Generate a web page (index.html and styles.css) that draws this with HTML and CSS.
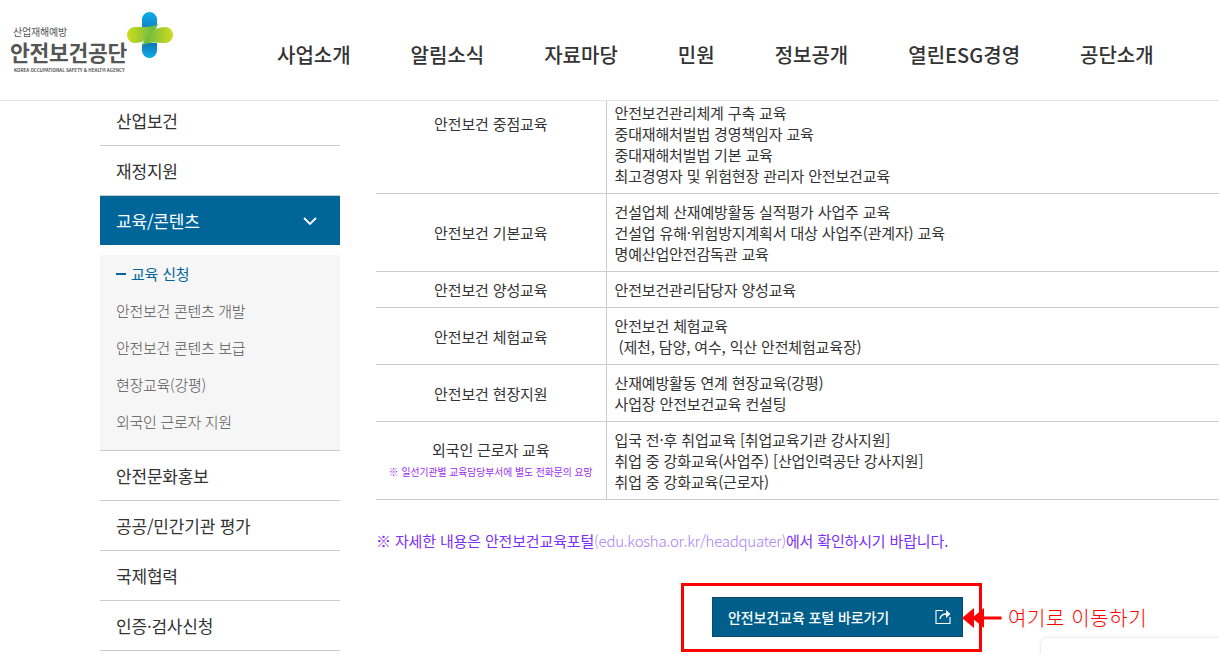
FILE: index.html
```html
<!DOCTYPE html>
<html lang="ko">
<head>
<meta charset="utf-8">
<title>교육 신청</title>
<link rel="stylesheet" href="styles.css">
</head>
<body>
<header class="header">
  <a class="logo">
    <div class="logo-text">
      <div class="logo-top">산업재해예방</div>
      <div class="logo-main">안전보건공단</div>
      <div class="logo-en">KOREA OCCUPATIONAL SAFETY &amp; HEALTH AGENCY</div>
    </div>
    <svg class="logo-mark" width="48" height="46" viewBox="0 0 48 46">
      <defs>
        <linearGradient id="b1" x1="0" y1="0" x2="0" y2="1"><stop offset="0" stop-color="#0badea"/><stop offset="1" stop-color="#0f86c6"/></linearGradient>
        <linearGradient id="b2" x1="0" y1="0" x2="0" y2="1"><stop offset="0" stop-color="#0f76b4"/><stop offset="1" stop-color="#0badea"/></linearGradient>
        <linearGradient id="g1" x1="0" y1="0" x2="1" y2="0"><stop offset="0" stop-color="#cfdc1c"/><stop offset="1" stop-color="#5fb548"/></linearGradient>
        <linearGradient id="g2" x1="0" y1="0" x2="1" y2="0"><stop offset="0" stop-color="#5fb548"/><stop offset="1" stop-color="#cfdc1c"/></linearGradient>
      </defs>
      <path d="M15 7.500a7.500 7.500 0 0 1 15 0V14C25 16 19 15 15 15z" fill="url(#b1)"/>
      <path d="M15 32c5-2 10-1 15-1v7.500a7.500 7.500 0 0 1-15 0z" fill="url(#b2)"/>
      <path d="M8 15C15 15 24 16 31 12C27 22 20 31 8 31A8 8 0 0 1 8 15z" fill="url(#g1)"/>
      <path d="M38 15A8 8 0 0 1 38 31C30 31 22 29 15 34C19 24 26 15 38 15z" fill="url(#g2)"/>
    </svg>
  </a>
  <nav class="gnb">
    <a>사업소개</a><a>알림소식</a><a>자료마당</a><a>민원</a><a>정보공개</a><a>열린ESG경영</a><a>공단소개</a>
  </nav>
</header>

<main class="page">
  <aside class="side">
    <div class="side-item">산업보건</div>
    <div class="side-item">재정지원</div>
    <div class="side-item active">교육/콘텐츠
      <svg width="14" height="8" viewBox="0 0 14 8"><path d="M1 1l6 6 6-6" fill="none" stroke="#fff" stroke-width="1.800"/></svg>
    </div>
    <ul class="sub">
      <li class="on">교육 신청</li>
      <li>안전보건 콘텐츠 개발</li>
      <li>안전보건 콘텐츠 보급</li>
      <li>현장교육(강평)</li>
      <li>외국인 근로자 지원</li>
    </ul>
    <div class="side-item">안전문화홍보</div>
    <div class="side-item">공공/민간기관 평가</div>
    <div class="side-item">국제협력</div>
    <div class="side-item">인증·검사신청</div>
  </aside>

  <section class="content">
    <table class="edu">
      <tr class="r1"><th>안전보건 중점교육</th><td>안전보건관리체계 구축 교육<br>중대재해처벌법 경영책임자 교육<br>중대재해처벌법 기본 교육<br>최고경영자 및 위험현장 관리자 안전보건교육</td></tr>
      <tr><th>안전보건 기본교육</th><td>건설업체 산재예방활동 실적평가 사업주 교육<br>건설업 유해·위험방지계획서 대상 사업주(관계자) 교육<br>명예산업안전감독관 교육</td></tr>
      <tr><th>안전보건 양성교육</th><td>안전보건관리담당자 양성교육</td></tr>
      <tr><th>안전보건 체험교육</th><td>안전보건 체험교육<br>&nbsp;(제천, 담양, 여수, 익산 안전체험교육장)</td></tr>
      <tr><th>안전보건 현장지원</th><td>산재예방활동 연계 현장교육(강평)<br>사업장 안전보건교육 컨설팅</td></tr>
      <tr class="r6"><th>외국인 근로자 교육<small>※ 일선기관별 교육담당부서에 별도 전화문의 요망</small></th><td>입국 전·후 취업교육 [취업교육기관 강사지원]<br>취업 중 강화교육(사업주) [산업인력공단 강사지원]<br>취업 중 강화교육(근로자)</td></tr>
    </table>
    <p class="note">※ 자세한 내용은 안전보건교육포털<span>(edu.kosha.or.kr/headquater)</span>에서 확인하시기 바랍니다.</p>
    <div class="cta-row">
      <div class="cta-box">
        <a class="cta">안전보건교육 포털 바로가기
          <svg width="16" height="16" viewBox="0 0 16 16"><path d="M8 1.500H1v13h14V8" fill="none" stroke="#fff" stroke-width="1.100"/><path d="M5 10C5.500 6.500 8 5 11.500 5" fill="none" stroke="#fff" stroke-width="1.300"/><path d="M11 1l4.500 4-4.500 4z" fill="#fff"/></svg>
        </a>
      </div>
      <div class="hint">
        <svg width="40" height="22" viewBox="0 0 40 22"><path d="M0 11L12 1v20z" fill="#f00"/><path d="M10 11L22 1v20z" fill="#f00"/><path d="M20 9.500h19.500v3H20z" fill="#f00"/></svg>
        <span>여기로 이동하기</span>
      </div>
    </div>
  </section>
</main>
<div class="float-card"></div>
</body>
</html>
```
FILE: styles.css
```css
* { box-sizing: border-box; }
html, body { margin: 0; height: 654px; overflow: hidden; background: #fff; }
body { font-family: "Noto Sans CJK KR", "Noto Sans", sans-serif; color: #333; position: relative; }

.header { height: 101px; display: flex; border-bottom: 1px solid #e5e5e5; position: relative; z-index: 1; background: #fff; }
.logo { width: 248px; padding: 12px 0 0 10px; display: flex; align-items: flex-start; }
.logo-text { width: 120px; padding-top: 13px; color: #555; }
.logo-top { font-size: 10px; line-height: 14px; padding-left: 3px; letter-spacing: -0.2px; }
.logo-main { font-size: 21.500px; line-height: 26px; font-weight: 700; color: #555; white-space: nowrap; letter-spacing: -0.3px; }
.logo-en { font-size: 4.500px; line-height: 8px; padding: 1px 0 0 4px; white-space: nowrap; font-weight: 700; }
.logo-mark { margin-left: -3px; }
.gnb { display: flex; gap: 60px; padding: 40px 0 0 29px; }
.gnb a { font-size: 20px; line-height: 30px; font-weight: 500; color: #333; white-space: nowrap; }

.page { display: flex; padding-left: 100px; }
.side { width: 240px; flex: none; margin-top: -5px; }
.side-item { height: 50px; padding: 0 16px; display: flex; align-items: center; justify-content: space-between; font-size: 17px; letter-spacing: -0.2px; color: #333; border-bottom: 1px solid #ccc; }
.side-item.active { height: 49px; background: #006699; color: #fff; border-bottom: 0; padding-right: 23px; }
.sub { list-style: none; margin: 10px 0 0; padding: 0 16px; height: 196px; background: #f6f6f6; border-bottom: 1px solid #ccc; }
.sub li { height: 37px; line-height: 37px; font-size: 15px; letter-spacing: -0.3px; color: #555; font-weight: 300; }
.sub li:first-child { margin-top: 1px; }
.sub .on { color: #006699; font-weight: 400; display: flex; align-items: center; gap: 5px; letter-spacing: -0.2px; }
.sub .on::before { content: ""; width: 10px; height: 2px; background: #006699; }

.content { flex: 1; margin-left: 36px; min-width: 0; }
.edu { width: 843px; border-collapse: collapse; table-layout: fixed; font-size: 15px; letter-spacing: -0.15px; line-height: 21px; color: #333; }
.edu th { width: 230px; font-weight: 400; text-align: center; border-bottom: 1px solid #ccc; border-right: 1px solid #ccc; padding: 7px 0; }
.edu td { padding: 7px 8px; border-bottom: 1px solid #ccc; }
.edu small { display: block; font-size: 9.800px; letter-spacing: 0; line-height: 12px; color: #9a2df0; margin-top: 6px; }
.edu .r1 th { padding: 12px 0 0; vertical-align: top; }
.edu .r1 td { padding: 1px 8px 7px; }
.edu .r6 th { padding: 7px 0 11px; }
.note { margin: 29px 0 0; font-size: 15px; letter-spacing: -0.15px; line-height: 24px; color: #7b2ff7; }
.note span { color: #a97cf5; letter-spacing: -0.25px; font-weight: 300; }

.cta-row { display: flex; align-items: center; margin: 30px 0 0 305px; }
.cta-box { width: 301px; height: 69px; border: 3px solid #f00; padding: 11px 0 0 28px; flex: none; }
.cta { width: 251px; height: 40px; background: #005f8a; border: 1px solid #0c4a68; color: #fff; font-size: 14px; letter-spacing: -0.1px; font-weight: 500; display: flex; align-items: center; justify-content: space-between; padding: 0 11px 0 15px; }
.hint { display: flex; align-items: center; gap: 6px; margin-left: -20px; color: #f00; font-size: 20px; font-weight: 300; white-space: nowrap; position: relative; }
.hint span { letter-spacing: 0.6px; }
.hint svg { flex: none; }
.float-card { position: absolute; left: 1040px; top: 637px; width: 200px; height: 40px; background: #fff; border: 1px solid #eee; border-radius: 8px; box-shadow: 0 0 4px rgba(0,0,0,.06); }
```
